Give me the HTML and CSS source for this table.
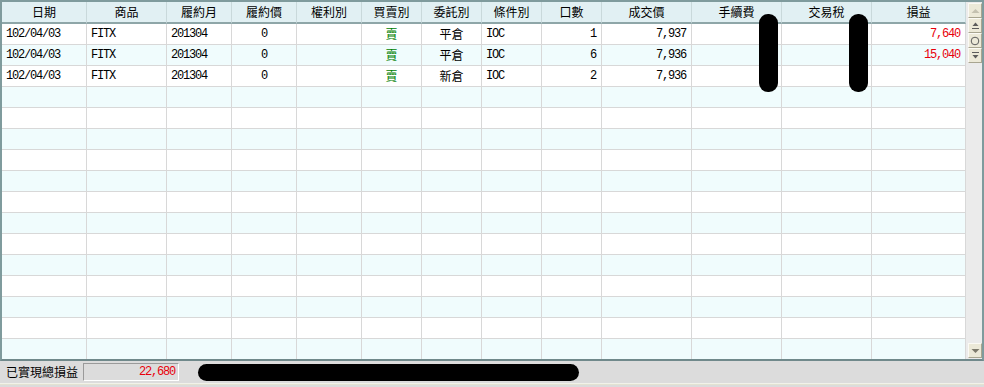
FILE: index.html
```html
<!DOCTYPE html>
<html lang="zh-Hant">
<head>
<meta charset="utf-8">
<title>已實現損益</title>
<link rel="stylesheet" href="styles.css">
</head>
<body>
<div class="frame">
  <div class="gridwrap">
    <div class="grid">
      <div class="hd">日期</div><div class="hd">商品</div><div class="hd">履約月</div><div class="hd">履約價</div><div class="hd">權利別</div><div class="hd">買賣別</div><div class="hd">委託別</div><div class="hd">條件別</div><div class="hd">口數</div><div class="hd">成交價</div><div class="hd">手續費</div><div class="hd">交易稅</div><div class="hd">損益</div>

      <div class="c l num">102/04/03</div><div class="c l lat">FITX</div><div class="c l num">201304</div><div class="c m num">0</div><div class="c"></div><div class="c m buy">賣</div><div class="c m">平倉</div><div class="c l lat">IOC</div><div class="c r num">1</div><div class="c r num">7,937</div><div class="c"></div><div class="c"></div><div class="c r num red">7,640</div>

      <div class="c l num alt">102/04/03</div><div class="c l lat alt">FITX</div><div class="c l num alt">201304</div><div class="c m num alt">0</div><div class="c alt"></div><div class="c m buy alt">賣</div><div class="c m alt">平倉</div><div class="c l lat alt">IOC</div><div class="c r num alt">6</div><div class="c r num alt">7,936</div><div class="c alt"></div><div class="c alt"></div><div class="c r num red alt">15,040</div>

      <div class="c l num">102/04/03</div><div class="c l lat">FITX</div><div class="c l num">201304</div><div class="c m num">0</div><div class="c"></div><div class="c m buy">賣</div><div class="c m">新倉</div><div class="c l lat">IOC</div><div class="c r num">2</div><div class="c r num">7,936</div><div class="c"></div><div class="c"></div><div class="c"></div>
    </div>
    <div class="filler">
      <div class="frow alt"></div><div class="frow"></div><div class="frow alt"></div><div class="frow"></div><div class="frow alt"></div><div class="frow"></div><div class="frow alt"></div><div class="frow"></div><div class="frow alt"></div><div class="frow"></div><div class="frow alt"></div><div class="frow"></div><div class="frow alt last"></div>
    </div>
  </div>
  <div class="vscroll">
    <div class="sbtn">
      <svg width="9" height="6" viewBox="0 0 9 6"><polygon points="0.5,5 4.5,1 8.5,5" fill="#c4c1b0"/></svg>
    </div>
    <div class="sbtn">
      <svg width="9" height="9" viewBox="0 0 9 9"><polygon points="1.5,5 4.5,1.5 7.5,5" fill="#5c5c5c"/><rect x="1" y="7" width="7" height="1" fill="#5c5c5c"/></svg>
    </div>
    <div class="sbtn">
      <svg width="10" height="10" viewBox="0 0 10 10"><circle cx="5" cy="5" r="3.8" fill="none" stroke="#5c5c5c" stroke-width="1"/></svg>
    </div>
    <div class="sbtn">
      <svg width="9" height="9" viewBox="0 0 9 9"><rect x="1" y="1" width="7" height="1" fill="#5c5c5c"/><polygon points="1.5,4 4.5,7.5 7.5,4" fill="#5c5c5c"/></svg>
    </div>
    <div class="track"></div>
    <div class="sbtn">
      <svg width="9" height="6" viewBox="0 0 9 6"><polygon points="0.5,1 4.5,5 8.5,1" fill="#7d7a6c"/></svg>
    </div>
  </div>
</div>
<div class="status">
  <span class="slabel">已實現總損益</span>
  <span class="sbox">22,680</span>
  <span class="sblack"></span>
</div>
<div class="strip"></div>
<div class="redact r1"></div>
<div class="redact r2"></div>
</body>
</html>
```

FILE: styles.css
```css
* { box-sizing: border-box; }
html, body { margin: 0; padding: 0; }
body {
  width: 984px;
  height: 387px;
  background: #dcdcdc;
  font-family: "Noto Sans CJK TC", "Noto Sans", sans-serif;
  font-size: 12px;
  color: #000;
  position: relative;
  overflow: hidden;
}
.frame {
  display: flex;
  height: 361px;
  border-top: 2px solid #7f9b9d;
  border-left: 2px solid #7f9b9d;
  border-right: 2px solid #7f9b9d;
  border-bottom: 2px solid #70898b;
  background: #fff;
}
.gridwrap {
  width: 964px;
  display: flex;
  flex-direction: column;
}
.grid {
  display: grid;
  grid-template-columns: 85px 80px 65px 65px 65px 60px 60px 60px 60px 90px 90px 90px 94px;
  grid-auto-rows: 21px;
}
.grid .hd {
  height: 22px;
}
.grid { grid-template-rows: 22px; }
.hd {
  background: #e1f0f3;
  border-right: 1px solid #c9d9db;
  border-bottom: 2px solid #8ea6a8;
  text-align: center;
  line-height: 19px;
}
.c {
  background: #fff;
  border-right: 1px solid #d8d8d8;
  border-bottom: 1px solid #d8d8d8;
  line-height: 20px;
  white-space: nowrap;
  overflow: hidden;
}
.alt { background: #f0fcfd; }
.l { text-align: left; padding-left: 4px; }
.m { text-align: center; }
.r { text-align: right; padding-right: 4px; }
.num, .lat {
  font-family: "Liberation Mono", "DejaVu Sans Mono", monospace;
  font-size: 12px;
  letter-spacing: -1.2px;
}
.r.num { padding-right: 5px; }
.buy { color: #008000; }
.red { color: #e8000b; }
.filler {
  flex: 1;
  display: flex;
  flex-direction: column;
}
.frow {
  height: 21px;
  flex: none;
  display: grid;
  grid-template-columns: 85px 80px 65px 65px 65px 60px 60px 60px 60px 90px 90px 90px 94px;
  background:
    linear-gradient(to right, transparent 84px, #d8d8d8 84px, #d8d8d8 85px, transparent 85px),
    linear-gradient(to right, transparent 164px, #d8d8d8 164px, #d8d8d8 165px, transparent 165px),
    linear-gradient(to right, transparent 229px, #d8d8d8 229px, #d8d8d8 230px, transparent 230px),
    linear-gradient(to right, transparent 294px, #d8d8d8 294px, #d8d8d8 295px, transparent 295px),
    linear-gradient(to right, transparent 359px, #d8d8d8 359px, #d8d8d8 360px, transparent 360px),
    linear-gradient(to right, transparent 419px, #d8d8d8 419px, #d8d8d8 420px, transparent 420px),
    linear-gradient(to right, transparent 479px, #d8d8d8 479px, #d8d8d8 480px, transparent 480px),
    linear-gradient(to right, transparent 539px, #d8d8d8 539px, #d8d8d8 540px, transparent 540px),
    linear-gradient(to right, transparent 599px, #d8d8d8 599px, #d8d8d8 600px, transparent 600px),
    linear-gradient(to right, transparent 689px, #d8d8d8 689px, #d8d8d8 690px, transparent 690px),
    linear-gradient(to right, transparent 779px, #d8d8d8 779px, #d8d8d8 780px, transparent 780px),
    linear-gradient(to right, transparent 869px, #d8d8d8 869px, #d8d8d8 870px, transparent 870px),
    linear-gradient(to right, transparent 963px, #d8d8d8 963px, #d8d8d8 964px, transparent 964px),
    #fff;
  border-bottom: 1px solid #d8d8d8;
}
.frow.alt {
  background-color: #f0fcfd;
}
.frow.last { border-bottom: none; flex: 1; }
.vscroll {
  width: 16px;
  background: #ebebeb;
  display: flex;
  flex-direction: column;
  align-items: flex-end;
  padding: 1px 0 1px 0;
}
.sbtn {
  width: 14px;
  height: 15px;
  flex: none;
  background: #ece9d8;
  border-top: 1px solid #fbfaf5;
  border-left: 1px solid #fbfaf5;
  border-right: 1px solid #a8a590;
  border-bottom: 1px solid #a8a590;
  display: flex;
  align-items: center;
  justify-content: center;
}
.sbtn + .sbtn { margin-top: 0; }
.track { flex: 1; }
.status {
  height: 22px;
  display: flex;
  align-items: center;
  padding-left: 6px;
}
.slabel {
  width: 77px;
  line-height: 16px;
}
.sbox {
  width: 96px;
  height: 18px;
  border-top: 1px solid #9a9a9a;
  border-left: 1px solid #9a9a9a;
  border-right: 1px solid #ffffff;
  border-bottom: 1px solid #ffffff;
  text-align: right;
  padding-right: 3px;
  color: #e8000b;
  font-family: "Liberation Mono", "DejaVu Sans Mono", monospace;
  letter-spacing: -1.2px;
  line-height: 16px;
}
.sblack {
  margin-left: 19px;
  width: 381px;
  height: 17px;
  background: #000;
  border-radius: 9px;
}
.strip {
  height: 2px;
  border-top: 1px solid #f2f2ea;
  background: #e3e3d2;
}
.redact {
  position: absolute;
  top: 14px;
  width: 19px;
  height: 78px;
  background: #000;
  border-radius: 9px;
}
.r1 { left: 759px; }
.r2 { left: 849px; }
```
